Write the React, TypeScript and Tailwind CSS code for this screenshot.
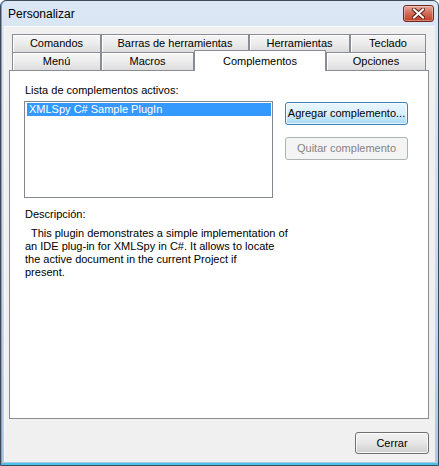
const font = "font-['Tahoma','Liberation_Sans',Arial,sans-serif]";

const tabIdle =
  "flex items-center justify-center border-t border-l border-r border-[#898c95] bg-gradient-to-b from-[#f6f6f6] via-[#ececec] to-[#dcdcdc] shadow-[inset_1px_1px_0_#ffffff] text-[11px] text-black";

function CloseButton() {
  return (
    <div className="flex h-[17px] w-[31px] items-center justify-center rounded-[3px] border border-[#6d2a22] bg-gradient-to-b from-[#e6a597] via-[#d26a55] to-[#c13c22] shadow-[inset_0_0_0_1px_rgba(255,255,255,0.35)]">
      <svg width="13" height="11" viewBox="0 0 13 11">
        <path d="M2 1.5 L11 9.5 M11 1.5 L2 9.5" stroke="#5a2018" strokeWidth="4" strokeLinecap="square" />
        <path d="M2 1.5 L11 9.5 M11 1.5 L2 9.5" stroke="#ffffff" strokeWidth="2" strokeLinecap="square" />
      </svg>
    </div>
  );
}

export default function App() {
  return (
    <div className={`${font} h-[466px] w-[439px] overflow-hidden`}>
      <div className="flex h-full w-full flex-col rounded-t-[6px] border border-[#3c4a5c] bg-gradient-to-b from-[#dbe7f5] via-[#cddcef] to-[#a9c9ea] shadow-[inset_1px_0_0_#6aa6dc,inset_0_-2px_0_#4cc3e6]">
        {/* title bar */}
        <div className="flex h-[25px] shrink-0 items-start justify-between pl-[7px] pr-[4px] pt-[4px]">
          <span className="pt-[1px] text-[12px] leading-[16px] text-black font-['Liberation_Sans',Arial,sans-serif]">Personalizar</span>
          <CloseButton />
        </div>

        {/* client area */}
        <div className="mx-[3px] mb-[3px] flex flex-1 flex-col border-l border-t border-[#f7f9fc] bg-[#f0f0f0] pl-[4px] pr-[4px] pt-[7px]">
          {/* tab strip */}
          <div className="ml-[3px] flex h-[18px]">
            <div className={`${tabIdle} h-[18px] w-[89px]`}>Comandos</div>
            <div className={`${tabIdle} h-[18px] w-[148px]`}>Barras de herramientas</div>
            <div className={`${tabIdle} h-[18px] w-[101px]`}>Herramientas</div>
            <div className={`${tabIdle} h-[18px] w-[76px]`}>Teclado</div>
          </div>
          <div className="ml-[3px] flex h-[18px] items-start">
            <div className={`${tabIdle} h-[18px] w-[89px]`}>Menú</div>
            <div className={`${tabIdle} h-[18px] w-[93px]`}>Macros</div>
            <div className="relative z-10 -mt-[2px] flex h-[21px] w-[132px] items-start justify-center border-l border-r border-t border-[#898c95] bg-white pt-[2px] text-[11px] text-black">
              Complementos
            </div>
            <div className={`${tabIdle} h-[18px] w-[100px]`}>Opciones</div>
          </div>

          {/* tab page */}
          <div className="h-[349px] w-[420px] border border-[#898c95] bg-white pl-[14px] pt-[13px] text-[11px] leading-[13px] text-black">
            <div className="pl-[1px]">Lista de complementos activos:</div>
            <div className="mt-[4px] flex items-start">
              <div className="h-[97px] w-[249px] border border-[#828790] bg-white p-[1px]">
                <div className="ml-[1px] h-[13px] bg-[#3399ff] pl-[2px] text-[11px] leading-[13px] text-white">
                  XMLSpy C# Sample PlugIn
                </div>
              </div>
              <div className="ml-[12px] mt-[1px] flex flex-col gap-[12px]">
                <button className="h-[23px] w-[123px] rounded-[3px] border border-[#3c7fb1] bg-gradient-to-b from-[#eaf6fd] via-[#d9f0fc] to-[#a7d9f5] text-[11px] text-black shadow-[inset_0_0_0_1px_rgba(255,255,255,0.7)]">
                  Agregar complemento...
                </button>
                <button className="h-[23px] w-[123px] rounded-[3px] border border-[#adb2b5] bg-[#f4f4f4] text-[11px] text-[#838383]">
                  Quitar complemento
                </button>
              </div>
            </div>
            <div className="mt-[10px] pl-[1px]">Descripción:</div>
            <div className="mt-[6px] pl-[1px]">
              <div className="whitespace-pre">{"  This plugin demonstrates a simple implementation of"}</div>
              <div>an IDE plug-in for XMLSpy in C#. It allows to locate</div>
              <div>the active document in the current Project if</div>
              <div>present.</div>
            </div>
          </div>

          {/* footer */}
          <div className="mt-[13px] flex justify-end pr-[2px]">
            <button className="h-[22px] w-[74px] rounded-[3px] border border-[#707070] bg-gradient-to-b from-[#f2f2f2] via-[#e6e6e6] to-[#cfcfcf] text-[11px] text-black shadow-[inset_0_0_0_1px_rgba(255,255,255,0.8)]">
              Cerrar
            </button>
          </div>
        </div>
      </div>
    </div>
  );
}
